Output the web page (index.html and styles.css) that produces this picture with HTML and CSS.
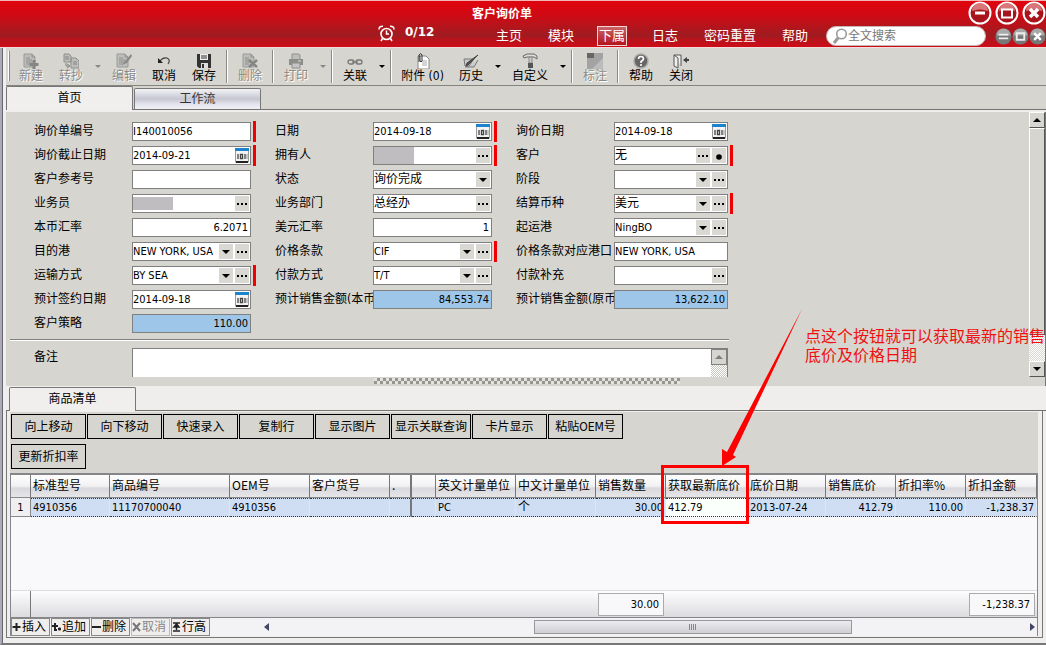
FILE: index.html
```html
<!DOCTYPE html>
<html lang="zh-CN">
<head>
<meta charset="utf-8">
<title>客户询价单</title>
<link rel="stylesheet" href="styles.css">
</head>
<body>
<svg class="defs" aria-hidden="true">
  <symbol id="cal" viewBox="0 0 14 15"><rect x=".5" y=".5" width="13" height="13" fill="#f4f4f4" stroke="#999"/><rect x="0" y="0" width="14" height="3" fill="#1d84cc"/><path d="M1 14h12" stroke="#222" stroke-width="2"/><path d="M3 6v5M5.500 6.500h2v4h-2zM10 6v5" stroke="#444" stroke-width="1.300" fill="none"/><path d="M12 6v5" stroke="#999"/></symbol>
  <symbol id="dots" viewBox="0 0 14 15"><path d="M2 7h2v2H2zM6 7h2v2H6zM10 7h2v2h-2z" fill="#000"/></symbol>
  <symbol id="down" viewBox="0 0 14 15"><path d="M3 6h8L7 10z" fill="#000"/></symbol>
  <symbol id="dot" viewBox="0 0 14 15"><circle cx="7" cy="9" r="2.800" fill="#000"/></symbol>
  <symbol id="page" viewBox="0 0 16 16"><path d="M1 1h8l3 3v10H1z" fill="#bdbdbb" stroke="#9a9a98"/><path d="M9 1v3h3M3 5h4M3 7h6M3 9h6M3 11h4" stroke="#8f8f8d" fill="none"/></symbol>
</svg>
<div class="window">
  <header class="top">
    <div class="title-row">
      <h1>客户询价单</h1>
      <div class="win-btns">
        <button aria-label="最小化"><svg viewBox="0 0 24 24"><circle cx="12" cy="12" r="10.500" fill="#a8141c" stroke="#fff" stroke-width="2"/><path d="M4 10a8 8 0 0 1 16 0q-8-3-16 0z" fill="#d9767a"/><path d="M7 12h10" stroke="#fff" stroke-width="3"/></svg></button>
        <button aria-label="最大化"><svg viewBox="0 0 24 24"><circle cx="12" cy="12" r="10.500" fill="#a8141c" stroke="#fff" stroke-width="2"/><path d="M4 10a8 8 0 0 1 16 0q-8-3-16 0z" fill="#d9767a"/><rect x="7" y="8.500" width="10" height="8" fill="none" stroke="#fff" stroke-width="2"/></svg></button>
        <button aria-label="关闭窗口"><svg viewBox="0 0 24 24"><circle cx="12" cy="12" r="10.500" fill="#a8141c" stroke="#fff" stroke-width="2"/><path d="M4 10a8 8 0 0 1 16 0q-8-3-16 0z" fill="#d9767a"/><path d="M8 8l8 8M16 8l-8 8" stroke="#fff" stroke-width="3.500"/></svg></button>
      </div>
    </div>
    <nav class="nav-row">
      <span class="alarm"><svg viewBox="0 0 17 17"><circle cx="8.500" cy="9" r="5.500" fill="none" stroke="#fff" stroke-width="1.600"/><path d="M8.500 5.500V9H11M1 4.500Q1 1 5 1.200M16 4.500Q16 1 12 1.200M4.500 13.500L3 16M12.500 13.500L14 16" fill="none" stroke="#fff" stroke-width="1.500"/></svg></span>
      <b class="count">0/12</b>
      <a href="#">主页</a><a href="#">模块</a><a href="#" class="boxed">下属</a><a href="#">日志</a><a href="#">密码重置</a><a href="#">帮助</a>
      <label class="search"><svg viewBox="0 0 16 16"><circle cx="9.500" cy="6" r="4.800" fill="#fff" stroke="#999" stroke-width="1.600"/><path d="M6 10l-4 5" stroke="#999" stroke-width="3"/></svg><input type="text" placeholder="全文搜索" aria-label="全文搜索"></label>
      <div class="mini-btns">
        <button aria-label="子窗口最小化"><svg viewBox="0 0 18 18"><circle cx="9" cy="9" r="8.500" fill="#777"/><path d="M1.500 8a7.500 7.500 0 0 1 15 0z" fill="#a9a9a9"/><path d="M4 7h10M4 11h10" stroke="#eee" stroke-width="2"/></svg></button>
        <button aria-label="子窗口还原"><svg viewBox="0 0 18 18"><circle cx="9" cy="9" r="8.500" fill="#777"/><path d="M1.500 8a7.500 7.500 0 0 1 15 0z" fill="#a9a9a9"/><rect x="5" y="5.500" width="8" height="7" fill="none" stroke="#eee" stroke-width="2"/></svg></button>
        <button aria-label="子窗口关闭"><svg viewBox="0 0 18 18"><circle cx="9" cy="9" r="8.500" fill="#777"/><path d="M1.500 8a7.500 7.500 0 0 1 15 0z" fill="#a9a9a9"/><path d="M5.500 5.500l7 7M12.500 5.500l-7 7" stroke="#fff" stroke-width="2.500"/></svg></button>
      </div>
    </nav>
  </header>

  <div class="frame">
    <div class="toolbar">
      <span class="grip"></span>
      <button disabled><svg viewBox="0 0 16 16"><use href="#page"/><path d="M11 7v9M6.500 11.500h9" stroke="#858583" stroke-width="3"/></svg>新建</button>
      <button disabled><svg viewBox="0 0 16 16"><path d="M1 1h5l2 2v6H1zM8 5h5l3 3v7H8z" fill="#bdbdbb" stroke="#8f8f8d"/><path d="M2 4h4M2 6h4M10 9h4M10 11h4M3 10v3h3M4 11l3 2-3 2" stroke="#858583" fill="none"/></svg>转抄</button>
      <span class="more off"></span>
      <button disabled><svg viewBox="0 0 16 16"><use href="#page"/><path d="M15 1L9 8l-3 4 5-2 5-7z" fill="#8a8a88"/></svg>编辑</button>
      <button><svg viewBox="0 0 16 16"><path d="M4 8q3-4 7-3 4 2 1 6" fill="none" stroke="#444" stroke-width="1.200"/><path d="M2 5v5h5z" fill="#222"/></svg>取消</button>
      <button><svg viewBox="0 0 16 16"><path d="M1 1h14v14H3l-2-2z" fill="#333"/><rect x="4" y="1" width="8" height="6" fill="#eee"/><path d="M5 3h6M5 5h6" stroke="#333"/><rect x="5" y="10" width="7" height="5" fill="#ddd"/><rect x="6" y="11" width="2" height="4" fill="#333"/></svg>保存</button>
      <span class="sep"></span>
      <button disabled><svg viewBox="0 0 16 16"><use href="#page"/><path d="M7 7l8 7M15 7l-8 7" stroke="#858583" stroke-width="2.500"/></svg>删除</button>
      <span class="sep"></span>
      <button disabled><svg viewBox="0 0 16 16"><path d="M4 6V1h7l1 1v4" fill="#bdbdbb" stroke="#90908e"/><path d="M1 6h14v6H1z" fill="#8d8d8b"/><path d="M4 10h8v5H4z" fill="#c5c5c3" stroke="#8d8d8b"/><path d="M10 8h3" stroke="#ddd"/></svg>打印</button>
      <span class="more off"></span>
      <span class="sep"></span>
      <button><svg viewBox="0 0 16 16"><g fill="none" stroke="#777" stroke-width="1.300"><rect x="1" y="7" width="6" height="4" rx="2"/><rect x="9" y="7" width="6" height="4" rx="2"/><path d="M5 9h6"/></g></svg>关联</button>
      <span class="more"></span>
      <span class="sep"></span>
      <button class="wide"><svg viewBox="0 0 16 16"><path d="M3 3h8l3 3v10H3z" fill="#fff" stroke="#888"/><path d="M7 8h5M7 10h5M7 12h5" stroke="#aaa"/><path d="M4 9V2q2-3 3 0v6q-1 2-2 0V3" fill="none" stroke="#333"/></svg>附件 (0)</button>
      <button><svg viewBox="0 0 16 16"><path d="M1 6h10l-5 7H2zM2 14h9l4-7" fill="#ccc" stroke="#777"/><path d="M15 2L5 12l-2 1 1-3z" fill="#555" stroke="#444"/></svg>历史</button>
      <span class="more"></span>
      <button class="wider"><svg viewBox="0 0 16 16"><path d="M1 3q4-3 9-2h2l3 2v3l-3-2H5L2 5z" fill="#ddd" stroke="#666"/><path d="M7 4h3v6H7z" fill="#ccc" stroke="#888"/><path d="M6 10h5v5H6z" fill="#555"/></svg>自定义</button>
      <span class="more"></span>
      <span class="sep"></span>
      <button disabled><svg viewBox="0 0 16 16"><rect width="16" height="16" fill="#a3a3a3"/><path d="M0 0h7v5H0z" fill="#666"/><path d="M16 5v11H5z" fill="#bcbcbc"/></svg>标注</button>
      <span class="sep"></span>
      <button><svg viewBox="0 0 16 16"><circle cx="8" cy="8" r="7" fill="#666" stroke="#aaa" stroke-width="1.500"/><path d="M5.500 6q0-2.500 2.500-2.500T10.500 6Q10 7.500 8 8.500V10M8 11v2" fill="none" stroke="#fff" stroke-width="1.600"/></svg>帮助</button>
      <button><svg viewBox="0 0 16 16"><path d="M1 2h7v11M1 2v11M1 2l4 3v10l-4-2" fill="#eee" stroke="#555"/><path d="M10 7l4-3v2h2v2h-2v2z" fill="#444"/></svg>关闭</button>
    </div>
    <div class="tabs"><button class="tab on">首页</button><button class="tab">工作流</button></div>

    <div class="form-wrap">
      <form class="form">
        <div class="fields">
          <div class="field req"><label for="f1">询价单编号</label><div class="ctl"><input id="f1" value="I140010056"></div></div>
          <div class="field req"><label for="f2">日期</label><div class="ctl"><input id="f2" value="2014-09-18"><button type="button" aria-label="选择日期"><svg><use href="#cal"/></svg></button></div></div>
          <div class="field"><label for="f3">询价日期</label><div class="ctl"><input id="f3" value="2014-09-18"><button type="button" aria-label="选择日期"><svg><use href="#cal"/></svg></button></div></div>

          <div class="field req"><label for="f4">询价截止日期</label><div class="ctl"><input id="f4" value="2014-09-21"><button type="button" aria-label="选择日期"><svg><use href="#cal"/></svg></button></div></div>
          <div class="field req"><label for="f5">拥有人</label><div class="ctl"><span class="mask"></span><input id="f5"><button type="button" aria-label="浏览"><svg><use href="#dots"/></svg></button></div></div>
          <div class="field req"><label for="f6">客户</label><div class="ctl"><input id="f6" class="zh" value="无"><button type="button" aria-label="浏览"><svg><use href="#dots"/></svg></button><button type="button" aria-label="查看"><svg><use href="#dot"/></svg></button></div></div>

          <div class="field"><label for="f7">客户参考号</label><div class="ctl"><input id="f7"></div></div>
          <div class="field"><label for="f8">状态</label><div class="ctl"><select id="f8" class="zh"><option>询价完成</option></select><i><svg><use href="#down"/></svg></i></div></div>
          <div class="field"><label for="f9">阶段</label><div class="ctl"><select id="f9"><option></option></select><i><svg><use href="#down"/></svg></i><button type="button" aria-label="浏览"><svg><use href="#dots"/></svg></button></div></div>

          <div class="field"><label for="f10">业务员</label><div class="ctl"><span class="mask low"></span><input id="f10"><button type="button" aria-label="浏览"><svg><use href="#dots"/></svg></button></div></div>
          <div class="field"><label for="f11">业务部门</label><div class="ctl"><input id="f11" class="zh" value="总经办"><button type="button" aria-label="浏览"><svg><use href="#dots"/></svg></button></div></div>
          <div class="field req"><label for="f12">结算币种</label><div class="ctl"><select id="f12" class="zh"><option>美元</option></select><i><svg><use href="#down"/></svg></i><button type="button" aria-label="浏览"><svg><use href="#dots"/></svg></button></div></div>

          <div class="field"><label for="f13">本币汇率</label><div class="ctl"><input id="f13" class="num" value="6.2071"></div></div>
          <div class="field"><label for="f14">美元汇率</label><div class="ctl"><input id="f14" class="num" value="1"></div></div>
          <div class="field"><label for="f15">起运港</label><div class="ctl"><select id="f15"><option>NingBO</option></select><i><svg><use href="#down"/></svg></i><button type="button" aria-label="浏览"><svg><use href="#dots"/></svg></button></div></div>

          <div class="field"><label for="f16">目的港</label><div class="ctl"><select id="f16"><option>NEW YORK, USA</option></select><i><svg><use href="#down"/></svg></i><button type="button" aria-label="浏览"><svg><use href="#dots"/></svg></button></div></div>
          <div class="field req"><label for="f17">价格条款</label><div class="ctl"><select id="f17"><option>CIF</option></select><i><svg><use href="#down"/></svg></i><button type="button" aria-label="浏览"><svg><use href="#dots"/></svg></button></div></div>
          <div class="field"><label for="f18">价格条款对应港口</label><div class="ctl"><input id="f18" value="NEW YORK, USA"></div></div>

          <div class="field req"><label for="f19">运输方式</label><div class="ctl"><select id="f19"><option>BY SEA</option></select><i><svg><use href="#down"/></svg></i><button type="button" aria-label="浏览"><svg><use href="#dots"/></svg></button></div></div>
          <div class="field"><label for="f20">付款方式</label><div class="ctl"><select id="f20"><option>T/T</option></select><i><svg><use href="#down"/></svg></i><button type="button" aria-label="浏览"><svg><use href="#dots"/></svg></button></div></div>
          <div class="field"><label for="f21">付款补充</label><div class="ctl"><input id="f21"><button type="button" aria-label="浏览"><svg><use href="#dots"/></svg></button></div></div>

          <div class="field"><label for="f22">预计签约日期</label><div class="ctl"><input id="f22" value="2014-09-18"><button type="button" aria-label="选择日期"><svg><use href="#cal"/></svg></button></div></div>
          <div class="field"><label for="f23">预计销售金额(本币</label><div class="ctl calc"><input id="f23" class="num" value="84,553.74" readonly></div></div>
          <div class="field"><label for="f24">预计销售金额(原币</label><div class="ctl calc"><input id="f24" class="num" value="13,622.10" readonly></div></div>

          <div class="field"><label for="f25">客户策略</label><div class="ctl calc"><input id="f25" class="num" value="110.00" readonly></div></div>
        </div>
        <hr>
        <div class="memo"><label for="memo">备注</label><div class="memo-box"><textarea id="memo"></textarea><div class="memo-bar"><button type="button" aria-label="向上"></button></div></div></div>
        <div class="splitter"></div>
      </form>
      <div class="vbar"><button class="up" aria-label="向上滚动"></button><div class="thumb"></div><div class="track"></div><button class="dn" aria-label="向下滚动"></button></div>
    </div>

    <div class="tabs lower"><button class="tab on">商品清单</button></div>
    <section class="list">
      <div class="actions">
        <button>向上移动</button><button>向下移动</button><button>快速录入</button><button>复制行</button><button>显示图片</button><button class="long">显示关联查询</button><button>卡片显示</button><button>粘贴OEM号</button>
        <button>更新折扣率</button>
      </div>
      <div class="grid">
        <table>
          <colgroup><col class="w20"><col class="w79"><col class="w120"><col class="w80"><col class="w80"><col class="w22"><col class="w24"><col class="w80"><col class="w80"><col class="w70"><col class="w82"><col class="w78"><col class="w70"><col class="w70"><col></colgroup>
          <thead><tr><th></th><th>标准型号</th><th>商品编号</th><th>OEM号</th><th>客户货号</th><th class="split">.</th><th></th><th>英文计量单位</th><th>中文计量单位</th><th>销售数量</th><th>获取最新底价</th><th>底价日期</th><th>销售底价</th><th>折扣率%</th><th>折扣金额</th></tr></thead>
          <tbody><tr><td class="idx">1</td><td>4910356</td><td>11170700040</td><td>4910356</td><td></td><td class="split"></td><td></td><td>PC</td><td class="zh">个</td><td class="num">30.00</td><td class="cur">412.79</td><td>2013-07-24</td><td class="num">412.79</td><td class="num">110.00</td><td class="num">-1,238.37</td></tr></tbody>
        </table>
        <div class="blank"></div>
        <div class="sums"><span class="corner"></span><output>30.00</output><output class="last">-1,238.37</output></div>
        <div class="foot">
          <button><svg viewBox="0 0 9 10"><path d="M4.500 1v8M.500 5h8" stroke="#222" stroke-width="2"/></svg>插入</button>
          <button><svg viewBox="0 0 9 10"><path d="M3 1v7h2M0 4h6M6 7h3M7.500 5.500v3" stroke="#222" stroke-width="2" fill="none"/></svg>追加</button>
          <button><svg viewBox="0 0 9 10"><path d="M0 5h9" stroke="#222" stroke-width="2"/></svg>删除</button>
          <button disabled><svg viewBox="0 0 9 10"><path d="M1 1l7 8M8 1L1 9" stroke="#777" stroke-width="2"/></svg>取消</button>
          <button><svg viewBox="0 0 9 10"><path d="M1 1h7M1 9h7M4.500 2v6M2 5l2.500-3L7 5z" stroke="#222" stroke-width="1.500"/></svg>行高</button>
          <div class="hbar"><span class="lt"></span><span class="hthumb"></span><span class="rt"></span></div>
        </div>
      </div>
    </section>
  </div>

  <svg class="arrow" viewBox="0 0 90 160" aria-hidden="true"><path d="M83 0L8 143 3 140v17l14-9-3-2z" fill="#f00"/></svg>
  <p class="note">点这个按钮就可以获取最新的销售<br>底价及价格日期</p>
  <div class="redbox"></div>
</div>
</body>
</html>
```
FILE: styles.css
```css
* { box-sizing: border-box; }
body {
  margin: 0;
  background: #f0efed;
  color: #000;
  font: 12px/16px "DejaVu Sans Condensed", "Noto Sans CJK SC", sans-serif;
}
button, input, select, textarea { font: inherit; color: inherit; margin: 0; padding: 0; border: 0; border-radius: 0; background: none; }
h1, th { font-family: "Noto Sans CJK SC", sans-serif; }
.defs { display: none; }
.window { position: relative; min-height: 100vh; display: flex; flex-direction: column; overflow: hidden; }

/* title area */
.top {
  height: 48px;
  border-top: 1px solid #f3b6b6;
  border-bottom: 1px solid #f4dcda;
  background: linear-gradient(#e0040e 0, #d00a14 30%, #9e1c21 76%, #b5141c 82%, #cc0d18 100%);
  color: #fff;
}
.title-row { height: 24px; display: grid; grid-template-columns: 1fr auto 1fr; align-items: center; }
.title-row h1 { grid-column: 2; margin: 0 42px 0 0; font-size: 12px; line-height: 24px; font-weight: 700; }
.win-btns { justify-self: end; display: flex; gap: 3px; }
.win-btns button { width: 24px; height: 24px; }
.win-btns svg, .mini-btns svg { display: block; width: 100%; height: 100%; }
.nav-row { display: flex; align-items: center; justify-content: flex-end; height: 22px; font-size: 13px; }
.alarm svg { display: block; width: 17px; height: 17px; margin-bottom: 6px; }
.count { width: 92px; padding-left: 10px; margin: 0 6px 8px 0; font: 700 12px/16px "DejaVu Sans", sans-serif; }
.nav-row a { color: #fff; text-decoration: none; margin-right: 20px; padding: 0 3px; line-height: 18px; white-space: nowrap; }
.nav-row a.boxed { padding: 0 1px; border: 1px solid #f1d4d4; background: linear-gradient(#c86468, #b5141c); margin-right: 22px; }
.nav-row .search { margin-left: -5px; width: 160px; height: 20px; border-radius: 10px; border: 1px solid #c9b4b4; background: #fff; display: flex; align-items: center; padding-left: 5px; }
.search svg { width: 16px; height: 16px; flex: none; }
.search input { flex: 1; min-width: 0; font-size: 12px; line-height: 18px; outline: 0; }
.search input::placeholder { color: #777; opacity: 1; }
.mini-btns { display: flex; margin-left: 9px; }
.mini-btns button { width: 17px; height: 17px; }

/* window body */
.frame { flex: 1; display: flex; flex-direction: column; border-left: 2px solid #aaaab8; box-shadow: inset 1px 0 #66666c; padding-left: 4px; border-bottom: 2px solid #777; }
.toolbar { display: flex; height: 38px; background: #d6d5cf; border-bottom: 1px solid #85857d; align-items: stretch; padding-left: 2px; }
.grip { width: 2px; margin: 3px 1px 4px 0; border-left: 1px solid #fff; border-right: 1px solid #8a8a86; }
.toolbar button { width: 40px; padding-top: 5px; display: flex; flex-direction: column; align-items: center; line-height: 15px; white-space: nowrap; }
.toolbar button svg { width: 16px; height: 16px; flex: none; }
.toolbar button:disabled { color: #8b8b87; text-shadow: 1px 1px #fff; }
.toolbar .wide { width: 57px; }
.toolbar .wider { width: 52px; }
.more { width: 13px; display: flex; align-items: center; justify-content: center; }
.more::after { content: ""; border: 3px solid transparent; border-top-color: #000; border-bottom: 0; }
.more.off::after { border-top-color: #888; }
.sep { width: 2px; margin: 2px 2px; border-left: 1px solid #8a8a86; border-right: 1px solid #fff; }

.tabs { display: flex; align-items: flex-end; gap: 1px; height: 24px; background: #d6d5cf; border-bottom: 1px solid #73736f; }
.tab { width: 127px; height: 21px; border: 1px solid #777; border-bottom: 0; border-radius: 2px 2px 0 0; background: linear-gradient(#f2f2f6, #c5c6d2 50%, #e2e3ec 75%, #f0f0f6); line-height: 20px; color: #333; }
.tab.on { height: 24px; margin-bottom: -1px; background: #f0efee; color: #000; line-height: 21px; }
.tabs.lower { height: 25px; background: #efeeed; padding-left: 3px; }

/* form */
.form-wrap { display: flex; background: #d6d5cf; border-top: 2px solid #efeeec; height: 276px; }
.form { flex: 1; padding: 7px 0 0 3px; min-width: 0; display: flex; flex-direction: column; }
.fields { display: grid; grid-template-columns: 241px 241px 241px; grid-auto-rows: 24px; padding-left: 25px; }
.field { display: flex; align-items: center; }
.field label { width: 98px; flex: none; white-space: nowrap; overflow: hidden; line-height: 20px; }
.ctl { width: 119px; height: 19px; flex: none; display: flex; align-items: center; background: #fff; border: 1px solid #808080; padding-right: 1px; }
.field:nth-child(3n) .ctl { width: 114px; }
.req::after { content: ""; width: 3px; height: 21px; margin-left: 2px; background: #f00000; }
.ctl input, .ctl select { flex: 1; min-width: 0; height: 17px; padding: 0; font-size: 11px; line-height: 17px; outline: 0; appearance: none; }
.ctl input.zh, .ctl select.zh { font-size: 12px; }
.ctl input.num { text-align: right; padding-right: 1px; }
.ctl button, .ctl i { width: 14px; height: 15px; flex: none; background: #d9d8d3; margin-left: 2px; pointer-events: none; }
.ctl svg { display: block; width: 14px; height: 15px; }
.ctl.calc { background: #9dc6e8; }
.mask { width: 40px; height: 17px; background: #bfbdbf; flex: none; }
.mask.low { height: 13px; }
.form hr { width: 719px; height: 2px; margin: 4px 0 7px 1px; border: 0; border-top: 1px solid #808080; border-bottom: 1px solid #fff; flex: none; }
.memo { display: flex; padding-left: 25px; }
.memo label { width: 98px; line-height: 18px; flex: none; }
.memo-box { width: 596px; height: 29px; display: flex; background: #fff; border: 1px solid #808080; border-bottom: 0; }
.memo textarea { flex: 1; height: 28px; resize: none; outline: 0; }
.memo-bar { width: 16px; background: repeating-conic-gradient(#c8c7c2 0 25%, #fff 0 50%) 0 0 / 2px 2px; }
.memo-bar button { display: flex; align-items: center; justify-content: center; width: 16px; height: 16px; border: 1px solid #808080; background: #d6d5cf; }
.memo-bar button::after { content: ""; border: 4px solid transparent; border-bottom-color: #808080; border-top: 0; }
.splitter { width: 306px; height: 6px; margin: 1px 0 0 365px; background: repeating-conic-gradient(#96968f 0 25%, #e4e3de 0 50%) 0 0 / 6px 6px; flex: none; }
.vbar { width: 17px; display: flex; flex-direction: column; padding-bottom: 9px; border-right: 1px solid #777; }
.vbar button, .thumb { border: 1px solid #fff; border-right-color: #555; border-bottom-color: #555; background: #d6d5cf; }
.vbar button { height: 16px; flex: none; display: flex; align-items: center; justify-content: center; }
.vbar button::after { content: ""; border: 4px solid transparent; }
.vbar .up::after { border-bottom-color: #000; border-top: 0; }
.vbar .dn::after { border-top-color: #000; border-bottom: 0; }
.thumb { flex: 8; }
.track { flex: 1; background: repeating-conic-gradient(#d6d5cf 0 25%, #fff 0 50%) 0 0 / 2px 2px; }

/* item list */
.list { flex: 1; display: flex; flex-direction: column; margin: 0 3px 5px 0; padding: 1px 4px 1px 3px; border: 1px solid #777; border-top: 0; background: #efeeed; }
.actions { display: flex; flex-wrap: wrap; gap: 5px 1px; background: #d6d5cf; padding: 2px 380px 4px 1px; }
.actions button { width: 75px; height: 25px; border: 1px solid #000; white-space: nowrap; line-height: 22px; }
.actions .long { width: 80px; }
.grid { flex: 1; display: flex; flex-direction: column; border: 1px solid #85858a; border-bottom: 0; border-top-width: 2px; background: #f9f9fb; }
table { width: 100%; table-layout: fixed; border-collapse: separate; border-spacing: 0; }
.w20 { width: 20px; } .w22 { width: 22px; } .w24 { width: 24px; } .w70 { width: 70px; } .w78 { width: 78px; }
.w79 { width: 79px; } .w80 { width: 80px; } .w82 { width: 82px; } .w120 { width: 120px; }
th, td { padding: 0 2px; white-space: nowrap; overflow: hidden; text-align: left; font-weight: 400; }
th { height: 23px; line-height: 20px; padding-bottom: 2px; border-right: 1px solid #77777a; border-bottom: 1px solid #888; background: linear-gradient(#fdfdfe, #f2f2f4 50%, #d9d9dd 60%, #e6e6e9); }
td { height: 19px; font-size: 11px; line-height: 17px; background: #d0def4; border-top: 1px dotted #333; border-bottom: 1px dotted #333; border-right: 1px solid #dfe6f3; }
td.zh { font-size: 12px; }
td.num { text-align: right; }
td.idx { background: #efeff1; text-align: center; border: 0; border-right: 1px solid #888; border-bottom: 1px solid #888; }
td.cur { background: #fafffc; }
th.split, td.split { border-right: 2px solid #77777a; }
.blank { flex: 1; }
.sums { display: flex; align-items: center; height: 28px; background: linear-gradient(#fdfdfe, #dcdce0); border-top: 1px solid #ddd; border-bottom: 1px solid #85858a; }
.corner { width: 20px; height: 27px; border-right: 1px solid #777; }
.sums output { width: 66px; height: 23px; padding-right: 4px; border: 1px solid #aaa; background: #f8f8fa; text-align: right; font-size: 11px; line-height: 21px; margin-left: 567px; }
.sums output.last { margin: 0 2px 0 auto; }
.foot { display: flex; height: 18px; background: #f3f2f4; }
.foot button { width: 39px; margin-right: 1px; border: 1px solid #888; background: #efeeed; display: flex; align-items: center; white-space: nowrap; line-height: 16px; }
.foot button svg { width: 9px; height: 10px; margin-right: 1px; flex: none; }
.foot button:disabled { color: #888; border-color: #bbb; }
.hbar { flex: 1; display: flex; align-items: center; padding: 0 2px 0 53px; }
.lt, .rt { border: 4px solid transparent; }
.lt { border-right: 5px solid #446; border-left: 0; }
.rt { border-left: 5px solid #446; border-right: 0; margin-left: auto; }
.hthumb { width: 318px; height: 14px; margin-left: 265px; border: 1px solid #999; background: repeating-linear-gradient(90deg, #888 0 1px, transparent 1px 2px) center / 8px 6px no-repeat, linear-gradient(#ececf0, #d0d0d4); }

/* annotation laid over the window */
.arrow { position: absolute; left: 719px; top: 309px; width: 90px; height: 160px; }
.note { position: absolute; left: 805px; top: 327px; margin: 0; color: #f01010; font-size: 16px; line-height: 19px; white-space: nowrap; }
.redbox { position: absolute; left: 661px; top: 465px; width: 88px; height: 59px; border: 3px solid #f00; }
```
